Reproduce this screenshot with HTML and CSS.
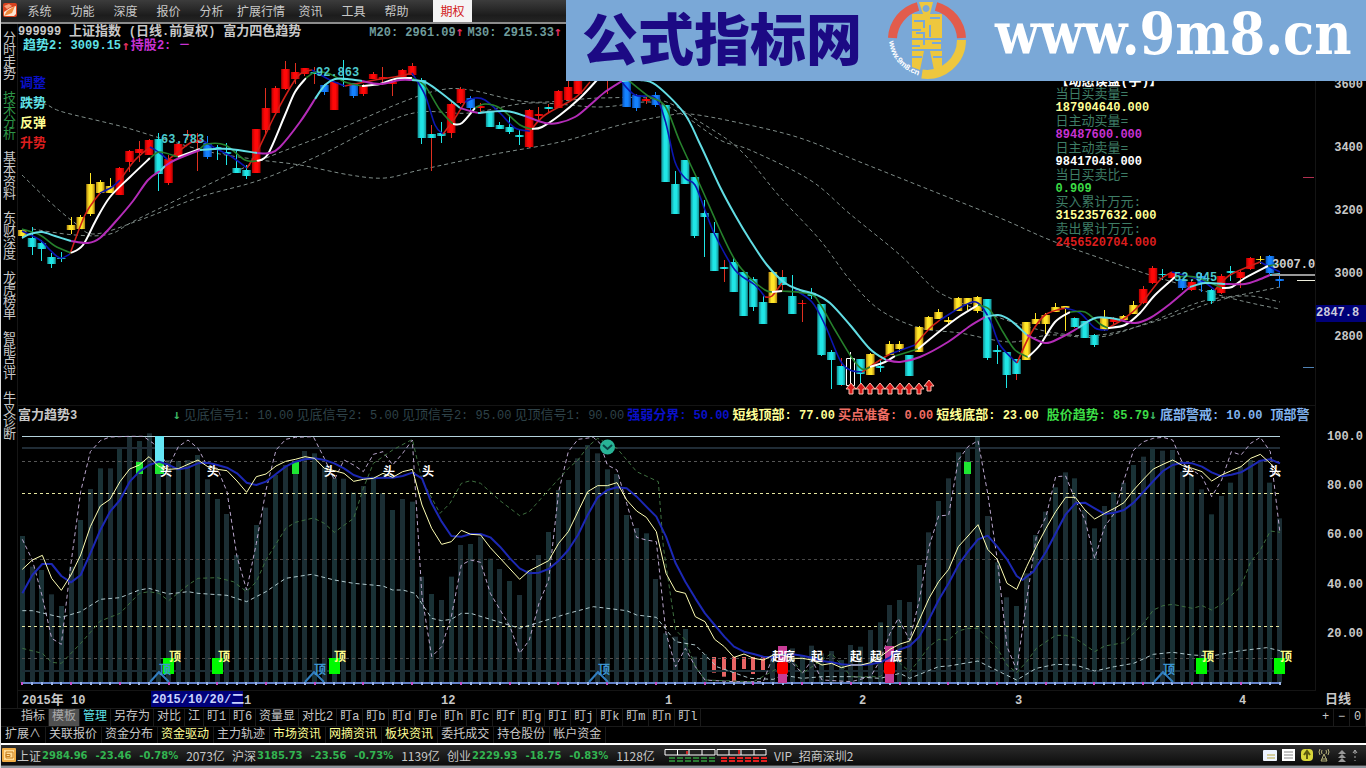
FILE: index.html
```html
<!DOCTYPE html>
<html lang="zh-CN">
<head>
<meta charset="utf-8">
<title>上证指数 日线</title>
<link rel="stylesheet" href="styles.css">
</head>
<body>
<div class="app">
  <nav class="menubar">
    <svg class="app-logo" viewBox="0 0 14 14"><rect width="14" height="14" rx="2" fill="#d8421f"/><path d="M1 3l5-2 3 2-5 3z" fill="#f6a07a"/><path d="M1 13V9l6-4 6-2v8l-2 2z" fill="#fbe4d4"/><path d="M1 13l3-5 8-5-3 7z" fill="#f08a3c"/></svg>
    <button>系统</button><button>功能</button><button>深度</button><button>报价</button><button>分析</button><button class="wide">扩展行情</button><button>资讯</button><button>工具</button><button>帮助</button><button class="option">期权</button>
  </nav>

  <main class="workspace">
    <nav class="sidebar">
      <button>分时走势</button><button class="current">技术分析</button><button>基本资料</button><button>东财深度</button><button>龙虎榜单</button><button>智能点评</button><button>牛叉诊断</button>
    </nav>

    <section class="pane price">
      <svg id="price" class="plot" viewBox="18 24 1297 382" preserveAspectRatio="xMinYMin meet"></svg>
      <header class="pane-head">
        <p class="row title"><b><i>999999</i> 上证指数 <i>(</i>日线<i>.</i>前复权<i>)</i> 富力四色趋势</b>
          <span class="ma first">M20: 2961.09<em>↑</em></span><span class="ma">M30: 2915.33<em>↑</em></span></p>
        <p class="row trend"><b class="c-cyan">趋势<i>2: 3009.15</i></b><em>↑</em><b class="c-mag">持股<i>2: －</i></b></p>
      </header>
      <ul class="legend"><li class="c-blue">调整</li><li class="c-cyan">跌势</li><li class="c-yellow">反弹</li><li class="c-red">升势</li></ul>
      <dl class="flow">
        <dt class="flow-title">【动态误盘(手)】</dt>
        <dt>当日买卖量=</dt><dd class="c-yellow">187904640.000</dd>
        <dt>日主动买量=</dt><dd class="c-mag">89487600.000</dd>
        <dt>日主动卖量=</dt><dd class="c-white">98417048.000</dd>
        <dt>当日买卖比=</dt><dd class="c-green">0.909</dd>
        <dt>买入累计万元:</dt><dd class="c-yellow">3152357632.000</dd>
        <dt>卖出累计万元:</dt><dd class="c-red">2456520704.000</dd>
      </dl>
    </section>
    <aside class="axis price-axis"><span>3600</span><span>3400</span><span>3200</span><span>3000</span><span>2800</span><mark>2847.8</mark></aside>

    <section class="pane indicator">
      <svg id="indicator" class="plot" viewBox="18 406 1297 285" preserveAspectRatio="xMinYMin meet"></svg>
      <header class="ind-head">
        <b class="name">富力趋势<i>3</i></b><em>↓</em>
        <span class="dim">见底信号<i>1: 10.00</i></span><span class="dim">见底信号<i>2: 5.00</i></span><span class="dim">见顶信号<i>2: 95.00</i></span><span class="dim">见顶信号<i>1: 90.00</i></span>
        <b class="c-blue">强弱分界<i>: 50.00</i></b><b class="c-yellow">短线顶部<i>: 77.00</i></b><b class="c-salmon">买点准备<i>: 0.00</i></b><b class="c-yellow">短线底部<i>: 23.00</i></b><b class="c-green gap">股价趋势<i>: 85.79</i></b><em class="tight">↓</em><b class="c-sky">底部警戒<i>: 10.00</i></b><b class="c-sky gap">顶部警</b>
      </header>
    </section>
    <aside class="axis ind-axis"><span>100.0</span><span>80.00</span><span>60.00</span><span>40.00</span><span>20.00</span></aside>

    <svg class="dates" viewBox="18 691 1297 17" preserveAspectRatio="xMinYMin meet">
      <rect x="151" y="691" width="92" height="16" fill="#00007a"/>
      <text x="22" y="704">2015<tspan class="han">年</tspan></text><text x="71" y="704">10</text><text class="hot" x="152" y="703">2015/10/20/<tspan class="han">二</tspan></text><text x="244" y="704">1</text><text x="441" y="704">12</text><text x="665" y="704">1</text><text x="859" y="704">2</text><text x="1015" y="704">3</text><text x="1239" y="704">4</text>
    </svg>
    <aside class="period">日线</aside>
  </main>

  <nav class="tabs first">
    <button>指标</button><button class="on">模板</button><button class="c-cyan">管理</button><button>另存为</button><button>对比</button><button>江</button><button class="s">盯1</button><button class="s">盯6</button><button>资量显</button><button>对比2</button><button class="s">盯a</button><button class="s">盯b</button><button class="s">盯d</button><button class="s">盯e</button><button class="s">盯h</button><button class="s">盯c</button><button class="s">盯f</button><button class="s">盯g</button><button class="s">盯I</button><button class="s">盯j</button><button class="s">盯k</button><button class="s">盯m</button><button class="s">盯n</button><button class="s">盯l</button>
    <span class="zoomers"><button>+</button><button>−</button><button>0</button></span>
  </nav>
  <nav class="tabs second">
    <button>扩展∧</button><button>关联报价</button><button>资金分布</button><button class="c-yellow">资金驱动</button><button>主力轨迹</button><button class="c-yellow">市场资讯</button><button class="c-yellow">网摘资讯</button><button class="c-yellow">板块资讯</button><button>委托成交</button><button>持仓股份</button><button>帐户资金</button>
  </nav>

  <footer class="status">
    <svg class="s-icon" viewBox="0 0 14 14"><rect width="14" height="14" rx="1" fill="#f0ad45"/><rect x="2" y="2" width="10" height="10" fill="#ffdc96"/><path d="M4 4h7v6H4zM4 6.500h4v2H4z" fill="none" stroke="#c88020"/></svg>
    <p class="quote"><span>上证</span><b class="px">2984.96</b><b>-23.46</b><b>-0.78%</b><span class="vol">2073亿</span></p>
    <p class="quote"><span>沪深</span><b class="px">3185.73</b><b>-23.56</b><b>-0.73%</b><span class="vol">1139亿</span></p>
    <p class="quote"><span>创业</span><b class="px">2229.93</b><b>-18.75</b><b>-0.83%</b><span class="vol">1128亿</span></p>
    <svg class="meter" viewBox="0 0 104 14">
      <path d="M1 1.500h50v5.500H1zM13.500 2v5M25 2v5M38 2v5M53 1.500h49v5.500H53zM65 2v5M77 2v5M90 2v5" fill="none" stroke="#fff"/>
      <path d="M5 10h46M5 13h46" stroke="#2a7a32" stroke-width="2" stroke-dasharray="6 2"/><path d="M57 10h46M57 13h46" stroke="#e21e1e" stroke-width="2" stroke-dasharray="6 2"/><path d="M23 3v3M75 2v4" stroke="#c22" stroke-width="2"/>
    </svg>
    <span class="account">VIP_招商深圳2</span>
    <svg class="tray" viewBox="0 0 98 16">
      <rect x="1" y="3" width="14" height="11" rx="1" fill="#eef4ff"/><path d="M5 8h8M5 11h8" stroke="#b9a740"/>
      <rect x="20" y="2" width="13" height="12" fill="#fff"/><path d="M22 5h9M22 8h9M22 11h9" stroke="#888"/>
      <rect x="39" y="2" width="12" height="12" rx="4" fill="#d9d63a"/><path d="M45 12V5M42 8l3-4 3 4" fill="none" stroke="#5d5a10" stroke-width="2"/>
      <path d="M59 14l3-7 3 7zM60 12h5M58 2q-2 3 0 6M66 2q2 3 0 6M60 3q-1 2 0 4M64 3q1 2 0 4" fill="none" stroke="#b6b27a"/>
      <path d="M76 7l4-4 4 4zM76 11l4-4 4 4zM76 15l4-4 4 4z" fill="#999"/><path d="M93 3v4M93 9v2M93 13v1M91 6l2-3 2 3" fill="none" stroke="#aaa"/>
    </svg>
  </footer>
  <div class="taskbar"></div>

  <div class="banner">
    <strong class="site">公式指标网</strong>
    <svg class="coin" viewBox="0 0 80 80">
      <g fill="none" stroke-width="9"><path d="M5.500 38A34.500 34.500 0 0 1 31 6.500M49 6.500A34.500 34.500 0 0 1 74.500 38" stroke="#e25c4c"/><path d="M74.500 40A34.500 34.500 0 0 1 35 74" stroke="#eec73e"/></g>
      <path fill="#eec73e" fill-rule="evenodd" d="M32 2h14l-3 12 12 0v24H25V14h11zM39 5a3.500 3.500 0 1 0 .1 0zM28 40h26v9H25V40zM25 51h30v16l-8 3-4-19h-6l-4 19-8-3z"/>
      <path d="M27 21h10v7M25 30h9M43 18h10M43 25v12M29 33h8v12M45 43h10M25 46h8M25 57h10M46 57h9" fill="none" stroke="#7aa8d7" stroke-width="2"/>
      <path id="arc" d="M2 41Q5 68 36 77" fill="none"/><text class="coin-text"><textPath href="#arc">www.9m8.cn</textPath></text>
    </svg>
    <strong class="domain">www.9m8.cn</strong>
  </div>
</div>
<script src="chart.js"></script>
</body>
</html>
```
FILE: styles.css
```css
* { box-sizing: border-box; margin: 0; padding: 0; }
html, body { height: 100%; background: #000; }
body { font-family: "Liberation Mono", "Noto Sans CJK SC", monospace; font-size: 12px; color: #c8c8c8; overflow: hidden; }
button { background: none; border: 0; color: inherit; font: inherit; white-space: nowrap; }
i, em { font-style: normal; }
ul { list-style: none; }

.app { position: relative; display: flex; flex-direction: column; height: 100vh; border-left: 1px solid #ddd; }

.c-cyan { color: #5fe0e6; }
.c-mag { color: #c832d2; }
.c-yellow { color: #ffff96; }
.c-blue { color: #0a10c8; }
.c-red { color: #dc1e1e; }
.c-green { color: #3cdc46; }
.c-white { color: #fff; }
.c-salmon { color: #f06e64; }
.c-sky { color: #82b4f0; }

.menubar { display: flex; height: 24px; padding-left: 2px; background: linear-gradient(#3c3c3c, #1c1c1c 70%, #242424); border-bottom: 2px solid #8c8c8c; font-family: "Noto Sans CJK SC", sans-serif; }
.app-logo { width: 14px; height: 14px; margin: 3px 1px 0 0; flex: none; }
.menubar button { width: 43px; height: 22px; line-height: 22px; }
.menubar .wide { width: 56px; }
.menubar .option { width: 39px; margin-left: 15px; background: #f4f4f4; color: #d22020; }

.workspace { flex: 1; min-height: 0; display: grid; grid-template-columns: 17px 1fr 51px; grid-template-rows: 382fr 285fr 17fr; }
.sidebar { grid-row: 1 / 4; display: flex; flex-direction: column; gap: 12px; padding-top: 9px; border-right: 1px solid #161616; }
.sidebar button { width: 13px; margin-left: 2px; white-space: normal; word-break: break-all; font-size: 13px; line-height: 12px; }
.sidebar .current { color: #2e9648; }

.pane { position: relative; min-width: 0; min-height: 0; overflow: hidden; font-size: 13px; box-shadow: inset 0 -1px #141414; }
.pane i { font-size: 12px; }
.plot { position: absolute; inset: 0; width: 100%; height: 100%; }
.pane-head { position: relative; padding-top: 1px; }
.row { display: flex; height: 14px; line-height: 14px; white-space: pre; }
.title b { font-weight: 700; }
.ma { margin-left: 4px; color: #6f9c9c; font-size: 12px; font-weight: 700; }
.ma.first { margin-left: 68px; }
.pane em { color: #e03060; font: 700 13px/14px "DejaVu Sans Mono", monospace; }
.trend { padding-left: 5px; gap: 1px; }
.legend { position: absolute; top: 50px; left: 2px; font-weight: 700; line-height: 20px; }
.flow { position: absolute; left: 80%; top: 51px; }
.flow dt { color: #3e7d66; line-height: 13px; height: 13px; }
.flow dd { font-weight: 700; font-size: 12px; line-height: 14px; height: 14px; }
.flow .flow-title { color: #fff; font-weight: 700; }
.axis { border-left: 1px solid #141414; font-weight: 700; text-align: right; padding-right: 3px; position: relative; }
.axis span { display: block; }
.price-axis { padding-top: 30px; }
.price-axis span { height: 63px; line-height: 63px; }
.price-axis mark { position: absolute; left: 0; right: 0; top: 281px; height: 17px; line-height: 17px; text-align: left; background: #000078; color: #ccd; }
.ind-axis { display: grid; grid-template-rows: repeat(5, 1fr); align-items: center; padding-top: 6px; padding-bottom: 32px; }

.ind-head { position: relative; display: flex; gap: 3px; height: 19px; line-height: 19px; white-space: pre; overflow: hidden; }
.ind-head > * { flex: none; }
.ind-head .name { width: 152px; }
.pane .ind-head em { color: #3cb464; line-height: 18px; }
.ind-head .dim { color: #2e4248; }
.ind-head .gap { margin-left: 5px; }
.ind-head .tight { margin-left: -3px; }

.dates { width: 100%; height: 100%; }
.dates text { font-size: 12px; font-weight: 700; fill: #c8c8c8; }
.dates .han { font-size: 13px; }
.dates .hot { fill: #c8d2ff; }
.period { padding-left: 10px; font-weight: 700; font-size: 13px; line-height: 17px; }

.tabs { display: flex; height: 18px; line-height: 17px; border-top: 1px solid #1a1a1a; }
.tabs button { padding: 0 3px; border-right: 1px solid #1a1a1a; height: 17px; }
.tabs.first { padding-left: 17px; }
.tabs.second { height: 17px; padding-left: 1px; }
.tabs.second button { padding: 0 4px 0 3px; }
.tabs .s { width: 26px; }
.tabs .on { background: #505050; color: #aaa; }
.zoomers { margin-left: auto; display: flex; }
.zoomers button { width: 16px; text-align: center; }

.status { display: flex; align-items: center; height: 22px; padding-left: 1px; background: linear-gradient(#2c2c2c, #0c0c0c); border-top: 2px solid #fff; font-family: "Noto Sans CJK SC", sans-serif; white-space: nowrap; }
.s-icon { width: 14px; height: 14px; margin-right: 1px; }
.quote { display: flex; align-items: center; width: 215px; }
.quote b { font: 700 10px "DejaVu Sans", sans-serif; color: #32b450; margin-left: 8px; }
.quote .px { margin-left: 1px; }
.quote .vol { margin-left: 8px; }
.meter { width: 104px; height: 14px; margin-left: 2px; }
.account { margin-left: 6px; }
.tray { width: 98px; height: 16px; margin-left: auto; margin-right: 6px; }
.taskbar { height: 3px; background: #8c949c; border-top: 1px solid #444; }

.banner { position: absolute; top: 0; right: 0; width: 800px; height: 81px; display: flex; align-items: flex-start; padding-left: 16px; background: #7aa8d7; white-space: nowrap; }
.site { font: 900 56px/72px "Noto Sans CJK SC", sans-serif; color: #1c0a84; }
.coin { width: 80px; height: 80px; margin-left: 25px; }
.coin-text { font: 700 8px "Liberation Sans", sans-serif; fill: #fff; }
.domain { font: 700 57px/68px "DejaVu Serif Condensed", "DejaVu Serif", serif; color: #fff; margin-left: 28px; }

.mark { font: 700 12px "Noto Sans CJK SC", sans-serif; }
.tag { font: 700 12px "Liberation Mono", monospace; }
```
FILE: chart.js
```js
const NS = "http://www.w3.org/2000/svg";
const X0 = 22.3, STEP = 9.747;
const xAt = i => X0 + i * STEP;

function add(parent, name, attrs, text) {
  const el = document.createElementNS(NS, name);
  for (const k in attrs) el.setAttribute(k, attrs[k]);
  if (text) el.textContent = text;
  parent.appendChild(el);
  return el;
}
const parse = s => s.trim().split(/\s+/).map(p => p.split(",").map(Number));

/* Smooth curve through all points. */
function curve(parent, pts, attrs) {
  let d = "M" + pts[0];
  for (let i = 0; i < pts.length - 1; i++) {
    const a = pts[i - 1] || pts[i], b = pts[i], c = pts[i + 1], e = pts[i + 2] || c;
    d += `C${b[0] + (c[0] - a[0]) / 6},${b[1] + (c[1] - a[1]) / 6} ${c[0] - (e[0] - b[0]) / 6},${c[1] - (e[1] - b[1]) / 6} ${c}`;
  }
  add(parent, "path", { d, fill: "none", ...attrs });
}

/* ---------- price pane ---------- */
const price = document.getElementById("price");
const COL = { c: ["#158c90", "#1fe6e6"], r: ["#b40000", "#ff0808"], y: ["#b08410", "#ffe628"], b: ["#0a50b4", "#1482ff"] };
const defs = add(price, "defs", {});
for (const k in COL) {
  const g = add(defs, "linearGradient", { id: "g-" + k });
  [[0, 0], [.35, 1], [.65, 1], [1, 0]].forEach(([o, n]) => add(g, "stop", { offset: o, "stop-color": COL[k][n] }));
}
const averages = [
  "22,98 45,104 63,112 120,126 160,138 210,152 260,160 300,165 350,175 385,178 420,170 490,155 560,142 620,125 665,116 690,114 740,123 800,138 860,162 930,190 1000,218 1050,240 1100,258 1150,275 1190,287 1230,298 1260,305 1280,309",
  "22,175 50,202 75,223 95,234 140,220 200,197 260,180 320,155 380,125 420,112 470,113 530,103 600,107 650,102 680,113 720,140 750,150 810,180 850,214 900,255 930,285 950,298 1000,318 1050,332 1100,335 1160,320 1220,300 1250,296 1280,302",
  "32,229 75,235 110,234 140,218 250,165 330,133 400,103 440,90 470,90 530,102 600,98 660,100 700,122 740,150 780,197 820,240 850,280 880,310 920,328 960,333 1010,342 1050,335 1100,337 1150,322 1200,302 1240,295 1280,287"
];
averages.forEach(s => curve(price, parse(s), { stroke: "#7f8c88", "stroke-dasharray": "4 3" }));

/* index, colour, body top, body bottom, high, low */
const candles = `0 y 230 236 229 238;1 c 238 247 227 255;2 c 243 249 240 261;3 c 257 264 253 268;4 c 258 259 252 262;5 y 225 230 217 234;6 y 217 229 215 229;7 y 184 214 173 216;8 y 182 193 180 194;9 y 186 193 178 193;10 r 168 195 167 195;11 r 151 162 150 172;12 r 149 153 141 162;13 r 140 155 139 155;14 c 139 174 133 191;15 r 159 183 155 185;16 r 144 157 144 157;17 r 134 136 130 140;18 r 141 143 133 171;19 b 143 157 136 159;20 c 147 149 145 160;21 c 152 154 143 165;22 c 168 173 150 173;23 c 170 176 165 179;24 r 129 173 129 173;25 r 108 130 88 134;26 r 88 113 86 113;27 r 69 89 61 90;28 r 72 79 63 84;29 r 68 74 68 76;30 c 72 74 67 84;31 b 85 92 84 95;32 r 82 110 82 110;33 c 78 80 60 87;34 b 83 96 83 98;35 r 86 94 84 96;36 r 74 79 72 79;37 r 77 79 67 85;38 r 82 84 80 96;39 r 70 77 69 77;40 r 66 75 63 76;41 c 80 138 78 144;42 c 134 138 125 171;43 c 133 136 122 143;44 r 104 133 102 138;45 r 89 103 87 104;46 b 98 108 96 112;47 r 106 108 103 112;48 c 112 127 112 127;49 c 125 129 122 129;50 c 127 132 115 134;51 c 135 137 130 145;52 r 110 147 109 148;53 r 114 116 107 120;54 c 107 109 104 112;55 r 91 108 90 108;56 r 87 100 78 100;57 r 70 94 70 94;60 c 70 78 70 94;62 b 76 107 76 107;63 b 95 108 94 111;64 r 99 101 97 104;65 b 95 105 92 107;66 c 105 182 105 182;67 c 184 214 171 214;68 c 160 184 160 184;69 c 177 236 177 238;70 c 213 217 200 257;71 c 233 271 222 271;72 c 267 269 260 282;73 c 262 292 257 292;74 c 272 316 272 316;75 c 279 307 277 311;76 c 302 324 295 324;77 y 272 303 272 303;78 c 277 285 270 292;79 c 296 314 275 314;80 r 303 304 300 322;81 c 293 296 288 299;82 c 304 355 304 356;83 c 352 360 350 389;84 c 366 385 358 386;86 c 359 374 359 384;87 y 354 375 353 375;88 c 366 368 360 372;89 y 344 355 341 355;90 y 344 349 341 352;91 c 355 376 355 376;92 y 327 352 326 352;93 y 317 330 316 330;94 y 312 319 309 319;95 y 320 322 317 324;96 y 298 311 297 311;97 y 298 304 298 310;98 y 297 311 296 313;99 c 299 358 299 360;100 c 350 352 345 364;101 c 352 375 352 388;102 c 359 374 359 380;103 y 322 360 322 360;104 y 319 324 313 324;105 y 315 324 313 334;106 y 307 312 303 312;107 y 306 308 306 331;108 c 318 327 317 328;109 c 321 338 321 338;110 c 335 345 334 347;111 y 317 330 310 331;112 r 319 322 317 324;113 y 316 320 315 322;114 y 305 314 301 314;115 r 289 303 286 304;116 r 268 283 266 284;117 c 274 275 269 280;118 r 273 278 272 279;119 b 279 288 279 290;120 r 282 290 280 291;121 b 276 284 273 292;122 c 290 301 289 304;123 r 276 293 274 294;124 c 271 273 266 281;125 r 272 278 270 288;126 r 258 269 257 270;127 y 259 260 256 264;128 b 256 273 255 274;129 b 279 281 275 287`;
for (const row of candles.split(";")) {
  const [i, k, top, bot, hi, lo] = row.trim().split(" ").map((v, n) => n === 1 ? v : +v);
  const x = xAt(i);
  add(price, "path", { d: `M${Math.floor(x)}.5 ${hi}V${lo}`, stroke: k === "r" || k === "c" && i % 6 === 0 ? "#e03020" : COL[k][1] });
  add(price, "rect", { x: x - 4.3, y: top, width: 8.6, height: bot - top, fill: `url(#g-${k})` });
}
add(price, "path", { d: "M846.500 358.500h8v27h-8zM850.500 352v33", fill: "none", stroke: "#fff" });

/* Each run of a line is drawn in the colour of its direction. */
const RUN = { B: "#0c16b0", R: "#cf2018", G: "#26802c", W: "#fff", M: "#b42cb8", C: "#62dde4" };
const runs = `B 22,231 40,240 50,250 60,258 70,254|R 70,254 85,215 100,193|B 100,193 112,187 120,180|R 120,180 135,160 150,147|B 150,147 160,153 168,160|R 168,160 190,143 202,140|B 202,140 215,148 232,157 247,168|R 247,168 258,150 275,115 295,80 304,72 312,70|B 312,70 330,80 345,86|R 345,86 375,80 400,76 412,73|B 412,73 425,95 435,125 443,134|R 443,134 455,118 465,102|B 465,102 475,98 485,100 500,113 515,128 530,131|R 530,131 545,115 575,98 590,82|B 620,80 635,95 655,98 665,120 675,162 685,178 695,185 705,210 715,235 735,270 755,285 765,297|R 765,297 772,296 782,283|B 795,290 812,302 825,325 840,360 850,370 862,372|R 862,372 880,360 890,354|B 890,354 915,345|R 915,345 930,328 940,320|B 940,320 965,305 978,303 990,320 1000,345 1017,363|R 1017,363 1030,335 1045,315 1065,308|B 1065,308 1080,313 1095,328 1108,330|R 1108,328 1125,318 1140,305 1160,280 1172,272|B 1172,272 1200,280 1215,290|R 1215,290 1230,275 1260,262|B 1260,262 1280,272
G 22,229 40,235 55,246 71,253|W 71,253 83,245 96,220 110,197 130,177 150,158|G 150,158 160,152 178,157|W 178,157 200,149|G 200,149 207,144 225,145 245,160 257,161|W 257,161 268,154 285,115 295,92 306,78|G 306,78 316,72 330,74 345,82 362,86|W 362,86 380,84 395,79 412,78|G 412,78 425,86 440,110 453,124|W 453,124 462,123 475,108|G 475,108 485,104 500,108 520,125 532,129|W 532,129 542,127 560,115 580,98 597,80|G 628,80 648,96 665,106 680,142 700,185 720,230 735,260 750,278 765,290 772,292|W 772,292 782,291|G 782,291 810,294 820,304 835,330 852,358 862,369 870,367|W 870,367 885,362 895,356|G 895,356 918,349|W 918,349 940,331 960,316 978,305|G 978,305 990,310 1003,332 1015,350 1028,357|W 1028,357 1040,345 1055,322 1070,312|G 1070,312 1085,312 1100,324 1108,328|W 1108,328 1125,325 1140,313 1155,295 1175,277|G 1175,277 1195,277 1222,288|W 1222,288 1232,287 1245,278 1268,266|G 1268,266 1280,264
C 22,238 30,234 42,232 55,236 71,241|M 71,241 88,243 100,238 117,220 133,201 148,180 160,171|C 160,171 165,166|M 165,166 175,160 200,150|C 200,150 215,149 230,149 257,153|M 257,153 270,153 280,147 300,122 315,99|C 315,99 325,85 335,79 347,79 362,81|M 362,81 380,84 400,80 412,80|C 412,80 425,82 440,92 460,108|M 460,108 470,111 478,113|C 478,113 505,111 525,116|M 525,116 545,123 558,123 575,117 590,105 605,92 622,81|C 622,81 640,80 656,85 684,113 700,144 720,187 735,215 750,240 767,265 785,283 800,290 815,294 830,303 850,325 870,349 886,360|M 886,360 900,362 920,357 948,342 970,326 985,317|C 985,317 998,315 1010,320 1027,335|M 1027,335 1045,343 1060,338 1078,328|C 1078,328 1095,318 1110,318 1120,320|M 1120,320 1135,323 1150,318 1170,304 1190,287|C 1190,287 1205,283 1225,284|M 1225,284 1245,284 1258,280 1270,275|C 1270,275 1280,274`;
for (const run of runs.split(/[|\n]/)) {
  curve(price, parse(run.slice(2)), { stroke: RUN[run[0]], "stroke-width": "BRG".includes(run[0]) ? 1.6 : 2 });
}
for (let i = 85; i <= 93; i++) {
  const y = i === 93 ? 380 : 383, x = Math.round(xAt(i));
  add(price, "path", { d: `M${x} ${y}l5 6h-3v5h-4v-5h-3z`, fill: "#d81818", stroke: "#ffc0b0" });
}
[[316, 76, "92.863"], [161, 143, "63.783"], [1174, 281, "52.945"]].forEach(([x, y, t]) => add(price, "text", { x, y, class: "tag", fill: "#4cc8cc" }, t));
add(price, "text", { x: 1272, y: 268, class: "tag", fill: "#d0d0d0" }, "3007.0");
add(price, "path", { d: "M1272 275h43", stroke: "#999", "stroke-width": 2 });
add(price, "path", { d: "M1297 280.500h18", stroke: "#eed" });
add(price, "path", { d: "M1303 177.500h11", stroke: "#b03050" });
add(price, "path", { d: "M1303 367.500h11", stroke: "#5082b4" });

/* ---------- indicator pane ---------- */
const ind = document.getElementById("indicator");
const UNIT = 3, TOP = 400, BASE = 683;
const levels = [408,500,510,583,618,500,360,267,205,205,145,110,123,100,110,180,183,180,165,238,297,342,465,565,375,323,225,195,185,153,160,200,235,236,278,258,230,280,330,297,305,530,582,600,530,435,432,410,476,507,543,585,510,465,396,270,240,175,135,160,208,222,345,384,400,537,700,710,687,770,763,0,0,0,0,0,0,765,0,745,765,737,760,753,780,735,740,690,667,615,600,606,495,397,303,235,157,145,110,348,487,592,618,520,405,335,262,217,235,330,385,318,277,248,195,170,145,152,150,215,225,268,343,288,248,200,180,180,248,355];
levels.forEach((v, i) => {
  if (v) add(ind, "rect", { x: Math.round(xAt(i) - 2.5), y: TOP + v / UNIT, width: 5, height: BASE - TOP - v / UNIT, fill: i % 2 ? "#1c2e34" : "#1a3236" });
});
[[71,818],[72,830],[73,845],[74,807],[75,822],[76,812]].forEach(([i, v]) => add(ind, "rect", { x: Math.round(xAt(i) - 2), y: 657, width: 4, height: TOP + v / UNIT - 657, fill: "#e86464" }));

const hline = (y, stroke, w = 1, dash = "none") => add(ind, "path", { d: `M22 ${y}H1280`, stroke, "stroke-width": w, "stroke-dasharray": dash });
hline(436.5, "#b4d2dc");
hline(448, "#202c36", 2);
hline(461.5, "#565656", 1, "3 3");
hline(493.5, "#e6e6a0", 1, "3 3");
hline(559.5, "#474747", 1, "3 3");
hline(626.5, "#e6e6a0", 1, "3 3");
hline(658.5, "#505050", 1, "3 3");
hline(671, "#1c2c34", 2);
hline(683, "#6482c8", 2);
for (let i = 0; i < 130; i++) add(ind, "rect", { x: Math.round(xAt(i) - 1), y: 682, width: 2, height: 3, fill: i % 5 ? "#9cb4e6" : "#c850c8" });

/* Parts of one line share a level scale and start at different left edges. */
function trace(attrs, a, b, c) {
  const pts = [];
  [[0, a], [450, b], [900, c]].forEach(([left, s]) => parse(s).forEach(([x, y]) => pts.push([left + x / UNIT, TOP + y / UNIT])));
  add(ind, "polyline", { points: pts.join(" "), fill: "none", "stroke-linejoin": "round", ...attrs });
}
trace({ stroke: "#b9a6cc", "stroke-dasharray": "4 3" },
  "67,418 97,480 127,590 155,715 184,733 213,490 242,275 271,155 301,122 330,111 389,109 430,109 460,130 506,200 535,140 564,120 594,145 623,200 652,205 681,275 711,470 740,570 769,430 798,270 828,150 857,118 886,112 940,110 973,175 1003,240 1032,180 1061,195 1090,215 1120,163 1149,155 1178,195 1208,160 1237,120 1266,590 1295,770 1325,740 1354,650",
  "4,650 34,495 62,480 92,487 121,580 180,680 209,760 238,720 267,610 296,540 326,275 355,155 384,118 430,112 450,130 472,195 501,210 530,310 560,412 589,420 619,425 648,700 677,800 706,745 736,800 765,840 850,845 940,845 970,765 998,780 1028,790 1057,820 1086,780 1116,840 1204,845 1262,830 1291,780 1320,700 1345,655",
  "0,665 29,720 58,600 87,440 116,348 146,345 175,180 204,140 234,122 263,280 292,480 321,740 350,810 380,600 409,410 438,350 467,230 497,228 526,300 555,360 584,475 614,380 643,340 672,240 701,150 731,125 760,115 789,112 818,120 848,190 877,210 906,230 935,290 965,240 994,155 1023,165 1052,130 1081,112 1111,155 1140,400");
trace({ stroke: "#3f7040", "stroke-dasharray": "4 3" },
  "67,745 127,760 155,787 184,790 242,730 301,663 360,640 418,580 447,575 477,580 506,602 564,555 594,535 652,533 700,545 740,575 769,545 798,480 857,385 886,367 940,354 973,370 1003,397 1061,355 1090,265 1120,190 1178,150 1237,118 1266,240 1320,340",
  "0,310 34,250 62,242 92,250 150,302 209,347 238,335 296,270 355,205 384,180 413,140 443,115 501,145 560,215 625,245 640,440 677,690 706,720 736,800 765,840 911,845 1028,780 1057,820 1145,760 1204,830 1291,830 1340,780",
  "0,790 29,815 58,780 87,740 116,718 146,720 175,693 204,685 234,685 292,745 321,795 350,818 380,785 409,745 467,706 497,706 526,715 584,755 614,738 672,728 731,670 760,630 789,617 818,613 877,625 906,617 935,630 965,613 1023,560 1052,485 1081,450 1111,393 1140,397");
trace({ stroke: "#b0c8cc", "stroke-dasharray": "4 3" },
  "67,632 97,632 184,652 242,635 301,598 360,593 418,570 447,565 506,582 564,575 594,580 681,586 740,605 798,575 857,535 935,523 1003,540 1061,550 1149,558 1178,570 1208,570 1245,580 1295,655 1325,662",
  "4,658 34,640 62,640 209,685 355,640 430,620 530,632 560,645 619,652 677,725 736,735 800,800 900,835 970,838 998,825 1057,835 1116,830 1204,830 1291,835",
  "0,820 29,835 116,800 146,798 234,783 292,812 350,840 409,805 467,793 526,795 584,813 643,800 701,790 760,763 818,757 877,765 935,768 1023,752 1100,743 1140,752");

add(ind, "rect", { x: 155, y: 436, width: 9, height: 27, fill: "#64e6f5" });
[[155, 462, 9, 12], [136, 462, 7, 12], [292, 462, 7, 12], [964, 462, 7, 12], [163, 658, 11, 16], [212, 658, 11, 16], [329, 658, 11, 16], [1196, 658, 11, 16], [1274, 658, 11, 16]]
  .forEach(([x, y, width, height]) => add(ind, "rect", { x, y, width, height, fill: y > 600 ? "#00fa00" : "#1ee632" }));
[778, 885].forEach(x => {
  add(ind, "rect", { x, y: 646, width: 9, height: 37, fill: "#c83c96" });
  add(ind, "rect", { x: x - 1, y: 662, width: 11, height: 12, rx: 2, fill: "#fa0000" });
});

trace({ stroke: "#1c28b4", "stroke-width": 2 },
  "67,580 97,525 127,492 155,492 184,528 213,547 242,525 271,460 301,390 330,335 360,300 389,245 418,215 447,195 477,185 506,195 535,208 564,203 594,190 623,188 652,195 681,203 711,220 740,248 769,255 798,245 828,222 857,200 886,185 915,178 944,175 973,180 1003,190 1032,205 1061,225 1090,235 1120,235 1149,233 1178,233 1208,228 1237,218 1266,235 1295,310 1325,365",
  "4,408 34,410 62,402 92,402 121,412 150,440 180,475 209,505 238,520 267,518 296,507 326,482 355,450 384,405 413,345 443,292 472,270 501,262 530,265 560,290 589,320 619,350 648,410 677,490 706,545 736,595 765,640 794,675 823,710 852,740 882,755 911,762 940,770 970,772 998,765 1028,763 1057,767 1086,773 1116,783 1145,787 1174,793 1204,795 1233,795 1262,793 1291,787 1320,772",
  "0,748 29,738 58,710 87,658 116,600 146,550 175,495 204,455 234,418 263,407 292,440 321,478 350,528 367,540 400,515 438,455 467,400 497,343 526,310 555,308 584,325 614,342 643,338 672,330 701,308 731,275 760,243 789,213 818,195 848,188 877,190 906,200 935,217 965,229 994,224 1023,217 1052,200 1081,182 1111,178 1140,190");
trace({ stroke: "#ffffb4" },
  "67,508 97,480 127,466 155,535 184,571 213,525 242,465 271,380 301,318 330,298 360,245 389,207 418,195 447,170 477,200 506,208 535,206 564,193 594,180 623,200 652,208 681,212 711,243 740,277 769,230 798,222 828,198 857,184 886,178 915,170 944,175 973,205 1003,212 1032,220 1061,244 1090,238 1120,235 1149,220 1178,232 1208,215 1237,208 1266,315 1295,385 1325,433",
  "4,425 34,391 62,403 92,405 121,443 209,538 238,512 267,497 296,482 326,430 355,395 384,335 413,275 443,257 472,257 501,248 530,300 560,333 589,352 619,395 648,520 677,573 706,580 736,650 765,665 794,718 823,740 852,772 882,762 911,775 940,780 970,765 998,765 1028,775 1057,775 1086,780 1116,795 1145,790 1174,803 1204,795 1233,795 1262,788 1291,770 1320,748",
  "0,732 29,723 58,660 87,595 116,545 146,508 175,440 204,408 234,374 263,448 292,478 321,550 350,568 380,500 409,440 438,385 467,335 497,292 526,292 555,330 584,357 614,340 643,325 672,308 701,270 731,237 760,207 789,193 818,180 848,197 877,205 906,215 935,243 965,225 994,212 1023,200 1052,175 1081,163 1111,190 1140,225");

[159, 314, 598, 1163].forEach(x => {
  add(ind, "path", { d: `M${x - 9} 682l9-10 10 10`, fill: "none", stroke: "#327dbe", "stroke-width": 2 });
  add(ind, "text", { x, y: 674, class: "mark", fill: "#3c96d2" }, "顶");
});
const marks = (t, y, fill, xs) => xs.forEach(x => add(ind, "text", { x, y, class: "mark", fill }, t));
marks("顶", 661, "#ffff8c", [169, 218, 334, 1202, 1280]);
marks("头", 476, "#fff", [160, 207, 324, 383, 422, 1182, 1269]);
marks("底", 661, "#fff", [783, 890]);
marks("起", 661, "#fff", [772, 811, 850, 870]);
add(ind, "circle", { cx: 607.5, cy: 447, r: 7.5, fill: "#28b496" });
add(ind, "path", { d: "M603 445l4.500 4 4.500-4", fill: "none", stroke: "#0a4646", "stroke-width": 2 });
```
